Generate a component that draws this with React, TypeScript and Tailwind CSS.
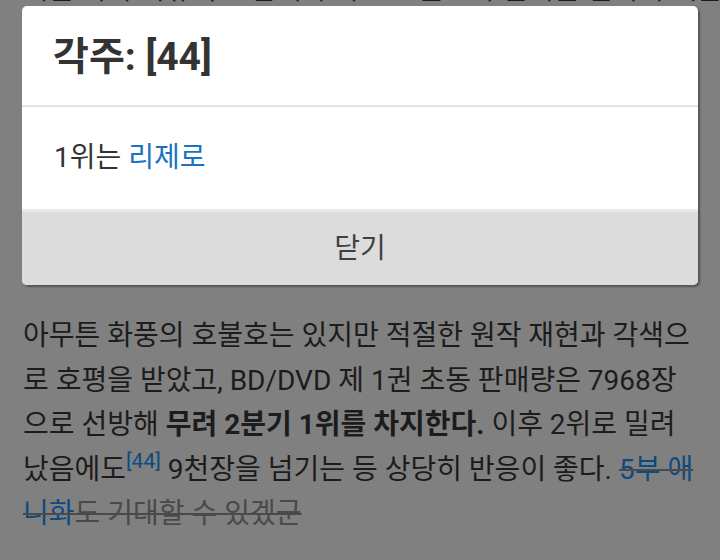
import React from "react";

const FONT = 'Roboto, "Noto Sans CJK KR", "Noto Sans", sans-serif';

export default function App() {
  return (
    <div
      className="relative w-[720px] h-[560px] overflow-hidden bg-[#808080] text-[#1c1c1c]"
      style={{ fontFamily: FONT }}
    >
      {/* page content behind the modal overlay */}
      <div className="px-[23px]">
        <p className="-mt-[33px] h-[45px] whitespace-nowrap text-[28px] leading-[45px]">
          이는 작가 특유의 그림체가 다소 호불호가 갈리는 편이기 때문이다
        </p>
        <p className="mt-[302px] whitespace-nowrap text-[28px] leading-[44.5px]">
          아무튼 화풍의 호불호는 있지만 적절한 원작 재현과 각색으
          <br />
          로 호평을 받았고, BD/DVD 제 1권 초동 판매량은 7968장
          <br />
          으로 선방해 <b className="font-bold">무려 2분기 1위를 차지한다.</b> 이후 2위로 밀려
          <br />
          났음에도
          <sup className="text-[#0d4a80]">[44]</sup> 9천장을 넘기는 등 상당히 반응이 좋다.{" "}
          <del className="text-[#4a4a4a] decoration-[2px]">
            <span className="text-[#0d4a80]">5부 애</span>
            <br />
            <span className="text-[#0d4a80]">니화</span>도 기대할 수 있겠군
          </del>
        </p>
      </div>

      {/* modal */}
      <div className="absolute left-[22px] top-[6px] w-[676px] overflow-hidden rounded-[5px] bg-white shadow-[2px_2px_2px_rgba(0,0,0,0.35)]">
        <div className="flex h-[101px] items-center border-b-2 border-[#e3e3e3] pl-[31px] pt-[4px]">
          <h2 className="text-[39px] font-bold leading-none text-[#333333]">각주: [44]</h2>
        </div>
        <div className="flex h-[102px] items-center pl-[32px] text-[28px] text-[#333333]">
          <span>
            1위는 <a className="text-[#1a73c0]">리제로</a>
          </span>
        </div>
        <div className="flex h-[76px] items-center justify-center border-t-[3px] border-[#e8e8e8] bg-[#dcdcdc] text-[28px] text-[#404040]">
          닫기
        </div>
      </div>
    </div>
  );
}
